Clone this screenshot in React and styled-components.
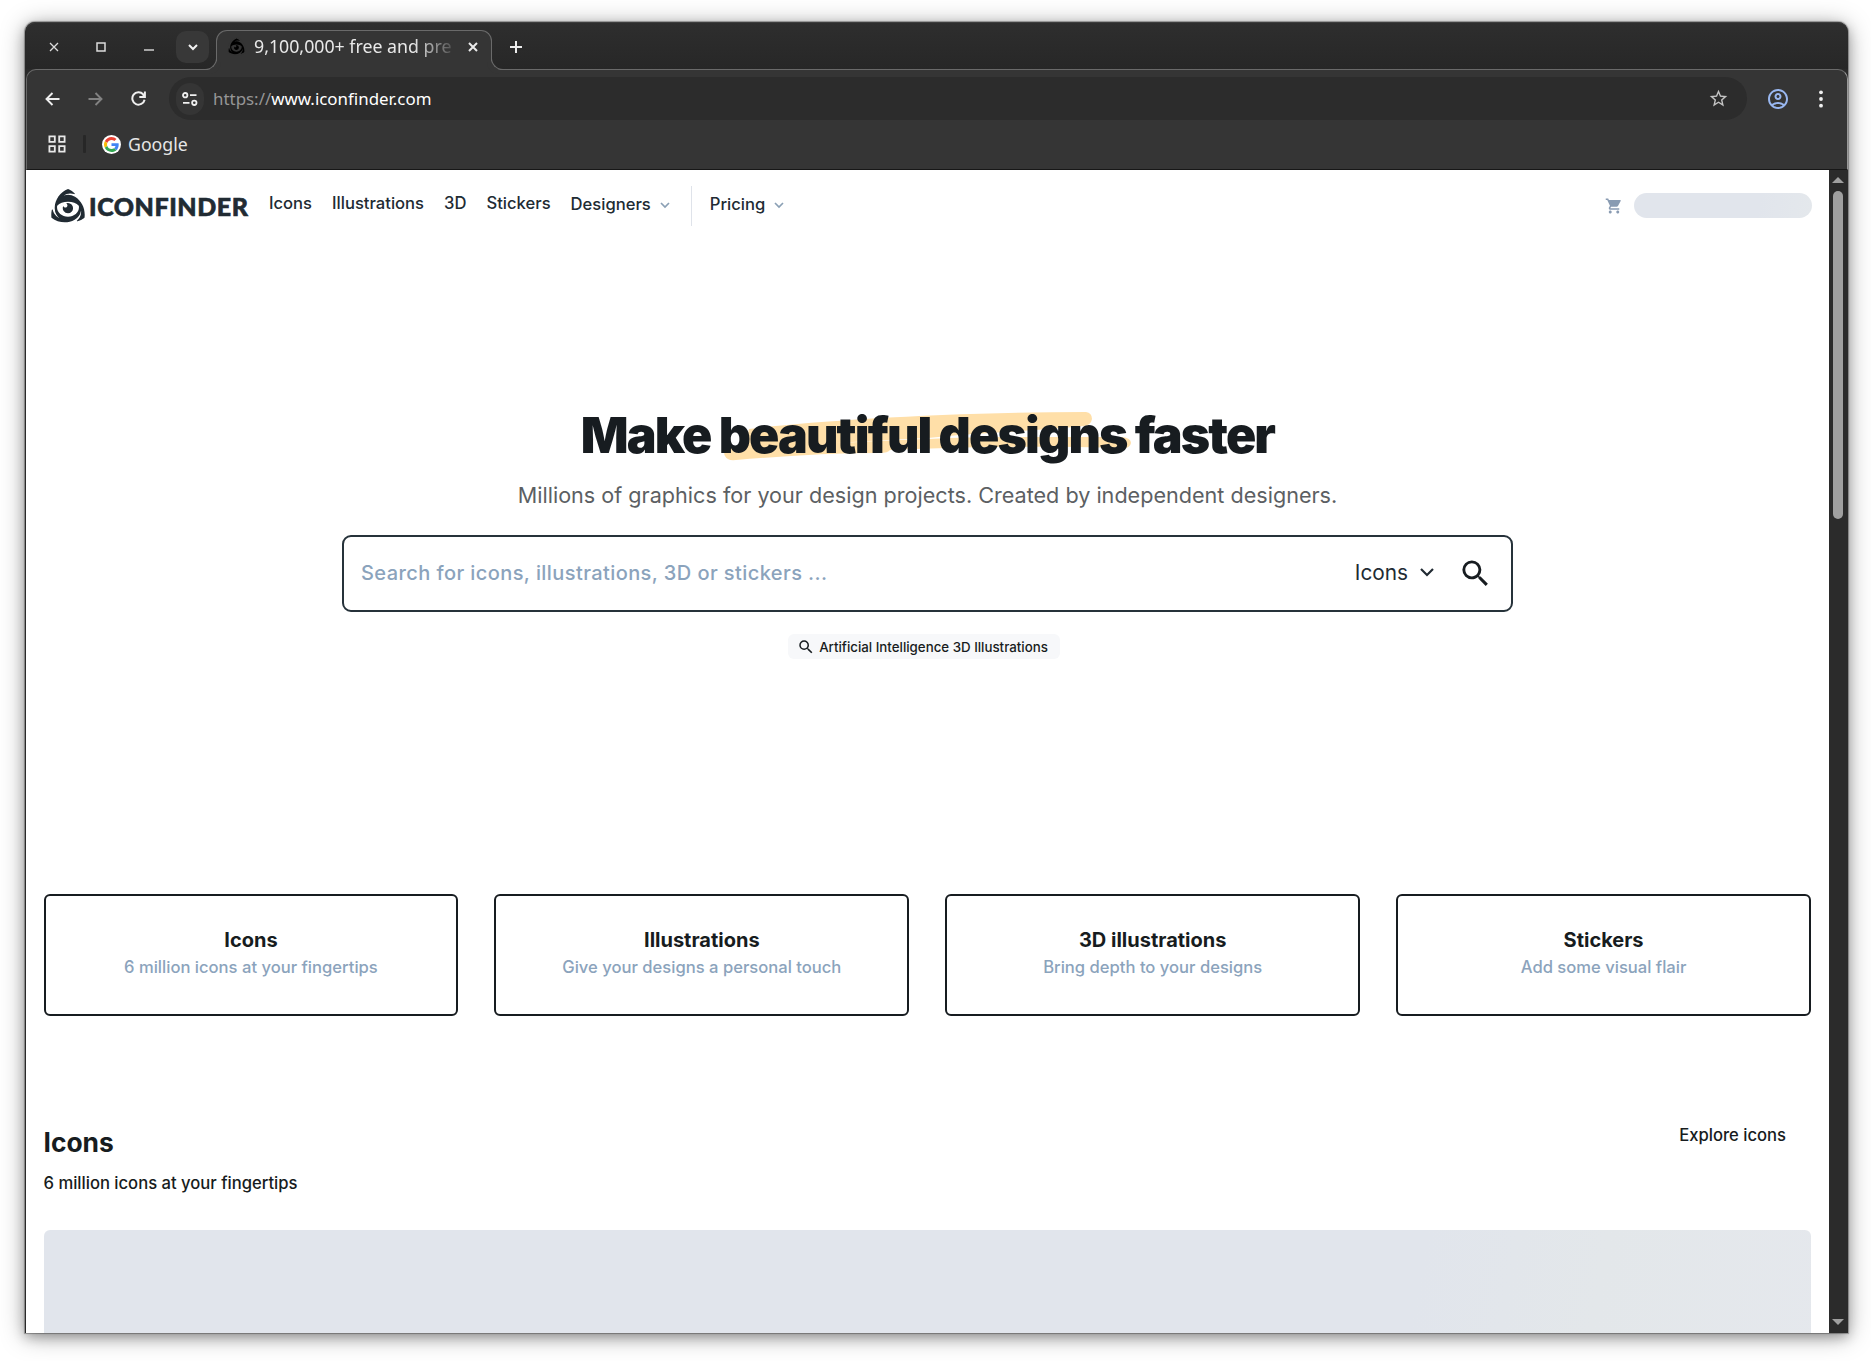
import React from 'react';
import styled, { createGlobalStyle } from 'styled-components';
import { SiIconfinder } from 'react-icons/si';
import { MdOutlineAccountCircle, MdShoppingCart, MdSearch, MdStarBorder } from 'react-icons/md';

const GlobalStyle = createGlobalStyle`
  *, *::before, *::after { box-sizing: border-box; }
  body { margin: 0; background: #fff; overflow: hidden; font-family: Inter, "Liberation Sans", sans-serif; }
  svg { display: block; flex: none; }
`;

const Desktop = styled.div`
  height: 1361px;
  padding: 22px 23px 28px 25px;
  background: #fff;
`;

const Window = styled.div`
  display: flex;
  flex-direction: column;
  height: 1311px;
  border-left: 1px solid #2a2a2a;
  border-radius: 10px 10px 0 0;
  background: #2a2a2a;
  box-shadow: 0 0 1px 1px rgba(0, 0, 0, 0.3), 0 4px 12px rgba(0, 0, 0, 0.25), 0 3px 24px rgba(0, 0, 0, 0.35);
`;

/* ---- Browser chrome ---- */

const TabStrip = styled.div`
  display: flex;
  align-items: flex-start;
  height: 47px;
  padding: 8px 0 0 18px;
  border-top: 1px solid #3d3d3d;
  border-radius: 10px 10px 0 0;
  background: linear-gradient(#2e2e2e, #272727);
`;

const WindowButton = styled.button`
  display: grid;
  place-items: center;
  width: 20px;
  height: 32px;
  margin: 0 ${p => p.$gap}px 0 0;
  padding: 0;
  border: 0;
  background: none;
  color: #dcdcdc;
`;

const TabSearch = styled(WindowButton)`
  width: 33px;
  margin-right: 7px;
  border-radius: 10px;
  background: #383838;
  color: #f2f2f2;
`;

const Tab = styled.div`
  position: relative;
  display: flex;
  align-items: center;
  width: 276px;
  height: 40px;
  margin-top: -1px;
  padding: 0 12px 8px 10px;
  border: 1px solid #6a6a6a;
  border-bottom: 0;
  border-radius: 11px 11px 0 0;
  background: #353535;
  color: #ececec;
  z-index: 1;

  &::before, &::after {
    content: "";
    position: absolute;
    bottom: 0;
    width: 13px;
    height: 13px;
    border-bottom: 1px solid #6a6a6a;
  }
  &::before {
    left: -13px;
    border-right: 1px solid #6a6a6a;
    border-bottom-right-radius: 12px;
    box-shadow: 4px 4px 0 0 #353535;
  }
  &::after {
    right: -13px;
    border-left: 1px solid #6a6a6a;
    border-bottom-left-radius: 12px;
    box-shadow: -4px 4px 0 0 #353535;
  }
`;

const TabTitle = styled.span`
  width: 199px;
  margin: 0 15px 0 8px;
  padding-bottom: 2px;
  overflow: hidden;
  white-space: nowrap;
  font: 400 17.75px/24px "Noto Sans", sans-serif;
  color: #e9e9e9;
  mask-image: linear-gradient(to right, #000 80%, rgba(0, 0, 0, 0.15) 100%);
`;

const NewTab = styled.div`
  display: grid;
  place-items: center;
  width: 30px;
  height: 32px;
  margin-left: 8.5px;
  color: #ececec;
`;

const ChromeBody = styled.div`
  width: 1822px;
  height: 101px;
  border: 1px solid #6a6a6a;
  border-right-color: #9a9a9a;
  border-bottom: 1px solid #171717;
  border-radius: 10px 10px 0 0;
  background: #353535;
`;

const Toolbar = styled.div`
  display: flex;
  align-items: center;
  height: 57px;
  padding: 0 24px 0 18px;
`;

const NavButton = styled.div`
  width: 43px;
  flex: none;
  color: ${p => (p.$dim ? '#828282' : '#efefef')};
`;

const Omnibox = styled.div`
  display: flex;
  align-items: center;
  width: 1578px;
  height: 43px;
  margin-left: -5px;
  padding: 0 18px 0 7px;
  border-radius: 22px;
  background: #2c2c2c;
`;

const SiteInfo = styled.div`
  display: grid;
  place-items: center;
  width: 28px;
  height: 32px;
  border-radius: 14px;
  background: #353535;
`;

const Url = styled.div`
  flex: 1;
  padding-left: 9px;
  font: 400 16.9px/24px "Noto Sans", sans-serif;
  color: #fff;
  span { color: #969696; }
`;

const Profile = styled.div`
  margin: 0 auto 0 19px;
`;

const BookmarkBar = styled.div`
  display: flex;
  align-items: center;
  height: 34px;
  padding-left: 21px;
  font: 400 17.7px/24px "Noto Sans", sans-serif;
  color: #e6e6e6;
`;

const BookmarkDivider = styled.div`
  width: 3px;
  height: 18px;
  margin: 0 16px 0 17px;
  border-radius: 1px;
  background: #272727;
`;

const GoogleBadge = styled.div`
  display: grid;
  place-items: center;
  width: 19px;
  height: 19px;
  margin-right: 7px;
  border-radius: 50%;
  background: #fff;
`;

/* ---- Page ---- */

const Viewport = styled.div`
  display: flex;
  height: 1163px;
`;

const Page = styled.main`
  width: 1803px;
  height: 1163px;
  overflow: hidden;
  background: #fff;
  color: #171c20;
`;

const Header = styled.header`
  display: flex;
  align-items: center;
  height: 71px;
  padding: 0 17px 0 21px;
`;

const Brand = styled.div`
  display: flex;
  align-items: center;
  width: 222px;
  font: 900 25px/32px Lato, sans-serif;
  letter-spacing: 0.55px;
  color: #212b33;
  -webkit-text-stroke: 0.6px #212b33;
  span { margin: 0 0 0 1px; }
`;

const NavItem = styled.a`
  display: flex;
  align-items: center;
  gap: ${p => (p.$gap ? p.$gap : 0)}px;
  margin-right: 20px;
  padding-bottom: ${p => (p.$menu ? 3 : 5)}px;
  font: 500 16.6px/24px Inter, sans-serif;
  color: #212b33;
  svg { color: #8ba0b5; margin-top: 3px; }
`;

const NavDivider = styled.div`
  width: 1px;
  height: 40px;
  margin: 0 18px 0 1px;
  background: #dfe3ea;
`;

const Account = styled.div`
  display: flex;
  align-items: center;
  gap: 11px;
  margin-left: auto;
  color: #899bb2;
`;

const SkeletonPill = styled.div`
  width: 178px;
  height: 25px;
  border-radius: 13px;
  background: linear-gradient(100deg, #e1e5ec 70%, #e4e8ec);
`;

const Hero = styled.section`
  display: flex;
  flex-direction: column;
  align-items: center;
  height: 653px;
  padding-top: 164px;
`;

const Headline = styled.h1`
  margin: 0;
  font: 900 50px/60px Inter, sans-serif;
  letter-spacing: -1.86px;
  white-space: nowrap;
`;

const Highlighted = styled.span`
  position: relative;
  isolation: isolate;
  svg { position: absolute; left: 3px; top: 5px; z-index: -1; }
`;

const Subtitle = styled.p`
  margin: 14px 0 0;
  font: 400 21.6px/32px Inter, sans-serif;
  color: #5c5f63;
`;

const SearchBox = styled.div`
  display: flex;
  align-items: center;
  width: 1171px;
  height: 77px;
  margin-top: 23.5px;
  padding: 0 18px 0 17px;
  border: 2.5px solid #26323a;
  border-radius: 9px;
`;

const Placeholder = styled.span`
  flex: 1;
  font: 500 20px/30px Inter, sans-serif;
  letter-spacing: 0.42px;
  color: #8ba3bc;
`;

const TypeSelect = styled.span`
  display: flex;
  align-items: center;
  gap: 11px;
  margin-right: 23px;
  font: 400 20.8px/30px Inter, sans-serif;
  color: #212b33;
`;

const Suggestion = styled.a`
  display: flex;
  align-items: center;
  gap: 4.5px;
  height: 25px;
  margin: 22.5px 7px 0 0;
  padding: 0 12px 0 8.5px;
  border-radius: 6px;
  background: #f7f8fa;
  font: 500 13.3px/20px Inter, sans-serif;
`;

const Cards = styled.section`
  display: grid;
  grid-template-columns: repeat(4, 1fr);
  gap: 36px;
  padding: 0 18px 0 17.5px;
`;

const Card = styled.a`
  height: 122px;
  padding-top: 31px;
  border: 2px solid #171c20;
  border-radius: 6px;
  text-align: center;
`;

const CardTitle = styled.h3`
  margin: 0;
  font: 700 20px/26px Inter, sans-serif;
`;

const CardText = styled.p`
  margin: 2px 0 0;
  font: 500 16.6px/24px Inter, sans-serif;
  color: #8ba3bc;
`;

const SectionHead = styled.section`
  display: flex;
  justify-content: space-between;
  height: 214px;
  padding: 107px 43px 0 17.5px;
`;

const SectionTitle = styled.h2`
  margin: 0 0 10px;
  font: 700 26.4px/38px Inter, sans-serif;
`;

const SectionText = styled.p`
  margin: 0;
  font: 500 16.63px/24px Inter, sans-serif;
`;

const SkeletonPanel = styled.div`
  height: 300px;
  margin: 0 18px 0 17.5px;
  border-radius: 6px;
  background: linear-gradient(100deg, #e1e5ec 76%, #e3e7ea 86%, #e5e8ed);
`;

const Scrollbar = styled.div`
  display: flex;
  flex-direction: column;
  align-items: center;
  justify-content: space-between;
  width: 19px;
  padding: 7px 1px 8px 0;
  background: #2b2b2b;
`;

const Arrow = styled.div`
  width: 12px;
  height: 6px;
  background: #a0a0a0;
  clip-path: ${p => (p.$down ? 'polygon(0 0, 100% 0, 50% 100%)' : 'polygon(50% 0, 100% 100%, 0 100%)')};
`;

const Thumb = styled.div`
  width: 10px;
  height: 328px;
  margin: 8px 0 auto;
  border-radius: 5px;
  background: #a0a0a0;
`;

const EyeFrame = styled.div`
  display: grid;
  flex: none;
  width: ${p => p.$size}px;
  height: ${p => p.$size}px;
  margin: ${p => p.$margin};
  > * { grid-area: 1 / 1; }
`;

/* The emblem is the counter shape of the badge, so the badge is laid in the ground colour over a solid base. */
function Eye({ size, color, ground, margin }) {
  return (
    <EyeFrame $size={size} $margin={margin}>
      <svg width={size} height={size} viewBox="0 0 24 24" fill={color}>
        <path d="M12 1C6 3.5 1.5 9.5 1.5 15.5V19.4C7.5 23.8 16.5 23.8 22.5 19.4V15.5C22.5 9.5 18 3.5 12 1Z" />
      </svg>
      <SiIconfinder size={size} color={ground} />
    </EyeFrame>
  );
}

const Stroke = ({ w, h, d, sw = 2 }) => (
  <svg width={w} height={h} viewBox={`0 0 ${w} ${h}`} fill="none" stroke="currentColor" strokeWidth={sw}>
    <path d={d} />
  </svg>
);

const Tune = () => (
  <svg width="16" height="14" viewBox="0 0 16 14" fill="none" stroke="#f0f0f0" strokeWidth="1.8">
    <circle cx="3.2" cy="3.2" r="2.2" /><path d="M8 3.2H14.5M1 10.8H7.5" /><circle cx="12.3" cy="10.8" r="2.2" />
  </svg>
);

const Apps = () => (
  <svg width="18" height="18" viewBox="0 0 18 18" fill="none" stroke="#e8e8e8" strokeWidth="1.8">
    <path d="M1.400 1.400h5.400v5.400h-5.400zM11.200 1.400h5.400v5.400h-5.400zM1.400 11.200h5.400v5.400h-5.400zM11.200 11.200h5.400v5.400h-5.400z" />
  </svg>
);

const GoogleMark = () => (
  <svg width="15" height="15" viewBox="0 0 48 48">
    <path fill="#EA4335" d="M24 9.5c3.54 0 6.71 1.22 9.21 3.6l6.85-6.85C35.9 2.38 30.47 0 24 0 14.62 0 6.51 5.38 2.56 13.22l7.98 6.19C12.43 13.72 17.74 9.5 24 9.5z" />
    <path fill="#4285F4" d="M46.98 24.55c0-1.57-.15-3.09-.38-4.55H24v9.02h12.94c-.58 2.96-2.26 5.48-4.78 7.18l7.73 6c4.51-4.18 7.09-10.36 7.09-17.65z" />
    <path fill="#FBBC05" d="M10.53 28.59c-.48-1.45-.76-2.99-.76-4.59s.27-3.14.76-4.59l-7.98-6.19C.92 16.46 0 20.12 0 24c0 3.88.92 7.54 2.56 10.78l7.97-6.19z" />
    <path fill="#34A853" d="M24 48c6.48 0 11.93-2.13 15.89-5.81l-7.73-6c-2.15 1.45-4.92 2.3-8.16 2.3-6.26 0-11.57-4.22-13.47-9.91l-7.98 6.19C6.51 42.62 14.62 48 24 48z" />
  </svg>
);

const Marker = () => (
  <svg width="410" height="52" viewBox="0 0 410 52" fill="#ffdfa8">
    <path d="M27 19C90 11 230 2 364 2Q370 3 370 9Q369 15 362 16C300 22 250 23 206 28Q160 30 113 33C180 30 240 27 280 27H400Q409 28 409 33Q408 38 402 38C330 36 250 36 168 40Q166 43 158 43C110 43 60 46 14 50Q5 51 3 46Q0 41 8 38L24 33Z" />
  </svg>
);

const Chevron = () => <Stroke w={10} h={7} sw={1.7} d="M1 1l4 4 4-4" />;

const cards = [
  ['Icons', '6 million icons at your fingertips'],
  ['Illustrations', 'Give your designs a personal touch'],
  ['3D illustrations', 'Bring depth to your designs'],
  ['Stickers', 'Add some visual flair'],
];

export default function App() {
  return (
    <Desktop>
      <GlobalStyle />
      <Window>
        <TabStrip>
          <WindowButton $gap={27}><Stroke w={10} h={10} sw={1.3} d="M1 1l8 8M9 1l-8 8" /></WindowButton>
          <WindowButton $gap={28}><Stroke w={10} h={10} sw={1.5} d="M1 1h8v8h-8z" /></WindowButton>
          <WindowButton $gap={17}><Stroke w={10} h={10} sw={1.4} d="M0 8h10" /></WindowButton>
          <TabSearch><Stroke w={10} h={7} d="M1 1l4 4 4-4" /></TabSearch>
          <Tab>
            <Eye size={19} color="#000" ground="#353535" />
            <TabTitle>9,100,000+ free and pre</TabTitle>
            <Stroke w={10} h={10} sw={2} d="M1 1l8 8M9 1l-8 8" />
          </Tab>
          <NewTab><Stroke w={12} h={12} sw={2} d="M6 0v12M0 6h12" /></NewTab>
        </TabStrip>
        <ChromeBody>
          <Toolbar>
            <NavButton><Stroke w={15} h={14} sw={1.9} d="M7.5 1L1.5 7l6 6M2 7h12.500" /></NavButton>
            <NavButton $dim><Stroke w={15} h={14} sw={1.9} d="M7.5 1L13.5 7l-6 6M13 7H0.500" /></NavButton>
            <NavButton><Stroke w={15} h={15} sw={2} d="M13.6 8.8A6.2 6.2 0 1 1 12.2 3.3M13.9 0.5V6H8.3M13.2 5.3L11.5 2.8" /></NavButton>
            <Omnibox>
              <SiteInfo><Tune /></SiteInfo>
              <Url><span>https://</span>www.iconfinder.com</Url>
              <MdStarBorder size={21} color="#c4c4c4" />
            </Omnibox>
            <Profile><MdOutlineAccountCircle size={24} color="#99b7f0" /></Profile>
            <svg width="4" height="18" viewBox="0 0 4 18" fill="#f0f0f0">
              <circle cx="2" cy="2.3" r="1.9" /><circle cx="2" cy="9" r="1.9" /><circle cx="2" cy="15.7" r="1.9" />
            </svg>
          </Toolbar>
          <BookmarkBar>
            <Apps />
            <BookmarkDivider />
            <GoogleBadge><GoogleMark /></GoogleBadge>
            Google
          </BookmarkBar>
        </ChromeBody>

        <Viewport>
          <Page>
            <Header>
              <Brand>
                <Eye size={40} color="#212b33" ground="#fff" margin="0 0 0 1px" />
                <span>ICONFINDER</span>
              </Brand>
              <NavItem>Icons</NavItem>
              <NavItem>Illustrations</NavItem>
              <NavItem>3D</NavItem>
              <NavItem>Stickers</NavItem>
              <NavItem $menu $gap={9}>Designers<Chevron /></NavItem>
              <NavDivider />
              <NavItem $menu $gap={9}>Pricing<Chevron /></NavItem>
              <Account>
                <MdShoppingCart size={18} />
                <SkeletonPill />
              </Account>
            </Header>

            <Hero>
              <Headline>Make <Highlighted><Marker />beautiful designs</Highlighted> faster</Headline>
              <Subtitle>Millions of graphics for your design projects. Created by independent designers.</Subtitle>
              <SearchBox>
                <Placeholder>Search for icons, illustrations, 3D or stickers ...</Placeholder>
                <TypeSelect>Icons<Stroke w={16} h={12} sw={2.2} d="M2 2l6 6 6-6" /></TypeSelect>
                <MdSearch size={35} color="#171c20" />
              </SearchBox>
              <Suggestion><MdSearch size={18} />Artificial Intelligence 3D Illustrations</Suggestion>
            </Hero>

            <Cards>
              {cards.map(([title, text]) => (
                <Card key={title}>
                  <CardTitle>{title}</CardTitle>
                  <CardText>{text}</CardText>
                </Card>
              ))}
            </Cards>

            <SectionHead>
              <div>
                <SectionTitle>Icons</SectionTitle>
                <SectionText>6 million icons at your fingertips</SectionText>
              </div>
              <SectionText>Explore icons</SectionText>
            </SectionHead>
            <SkeletonPanel />
          </Page>
          <Scrollbar>
            <Arrow />
            <Thumb />
            <Arrow $down />
          </Scrollbar>
        </Viewport>
      </Window>
    </Desktop>
  );
}
